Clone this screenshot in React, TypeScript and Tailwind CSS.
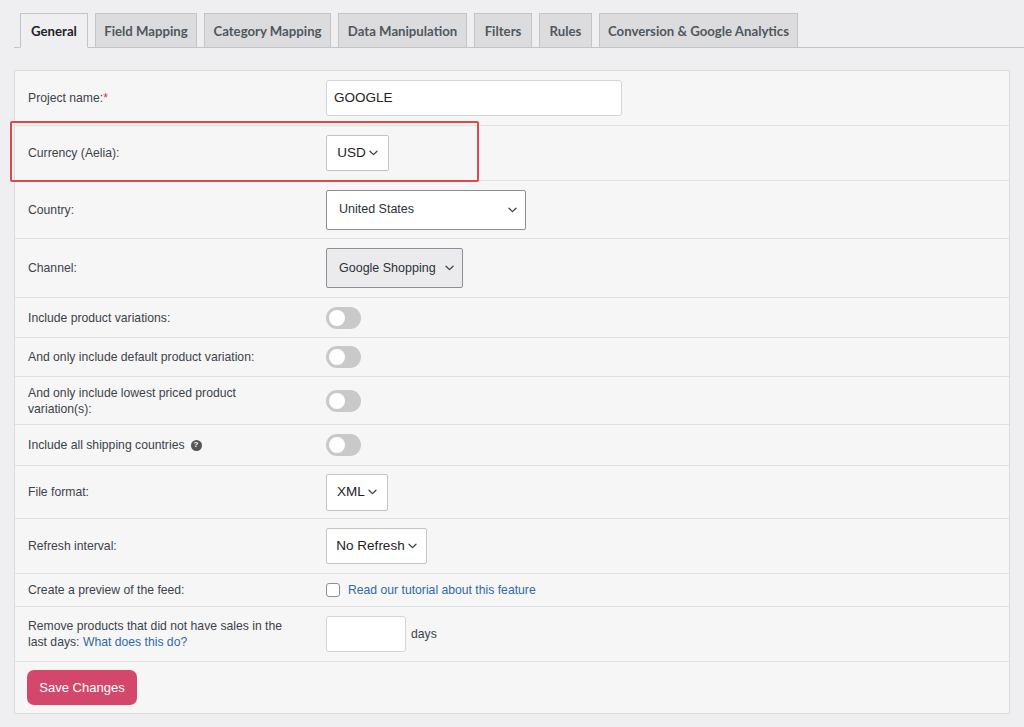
import React from "react";

const font = { fontFamily: '"Liberation Sans", Arial, sans-serif' };

function Chevron({ className = "" }: { className?: string }) {
  return (
    <svg width="9" height="6" viewBox="0 0 9 6" className={className}>
      <polyline points="1,1.2 4.5,4.6 8,1.2" fill="none" stroke="#3c434a" strokeWidth="1.3" strokeLinecap="round" strokeLinejoin="round" />
    </svg>
  );
}

function Toggle() {
  return (
    <div className="w-[35px] h-[22px] rounded-full bg-[#c9c9c9] flex items-center pl-[3px]">
      <div className="w-[16px] h-[16px] rounded-full bg-white" />
    </div>
  );
}

function Row({ label, h, children, last }: { label: React.ReactNode; h: string; children?: React.ReactNode; last?: boolean }) {
  return (
    <div className={`flex items-center ${h} ${last ? "" : "border-b border-[#e1e1e3]"}`}>
      <div className="w-[311px] pl-[13px] pr-[30px] text-[12.2px] leading-[16px] text-[#3c434a]">{label}</div>
      <div className="flex items-center">{children}</div>
    </div>
  );
}

const tabs = [
  { t: "General", w: "w-[68px]", active: true },
  { t: "Field Mapping", w: "w-[102px]" },
  { t: "Category Mapping", w: "w-[127px]" },
  { t: "Data Manipulation", w: "w-[129px]" },
  { t: "Filters", w: "w-[58px]" },
  { t: "Rules", w: "w-[53px]" },
  { t: "Conversion & Google Analytics", w: "w-[199px]" },
];

export default function App() {
  return (
    <div className="w-[1024px] h-[727px] bg-[#efeff1] overflow-hidden relative" style={font}>
      {/* Tabs */}
      <div className="pt-[14px] pl-[14px]">
        <div className="flex items-end gap-[7px] pl-[6px] border-b border-[#c3c4c7] h-[34px]">
          {tabs.map((tab) => (
            <div
              key={tab.t}
              className={`${tab.w} flex items-center justify-center text-[13.2px] font-bold border border-[#c3c4c7] pt-[2px] ${
                tab.active ? "bg-[#efeff1] text-[#1d2327] border-b-[#efeff1] -mb-px h-[35px]" : "h-[34px] bg-[#dcdcde] text-[#50575e] border-b-0"
              }`}
              style={{ fontFamily: 'Lato, "Liberation Sans", sans-serif' }}
            >
              {tab.t}
            </div>
          ))}
        </div>
      </div>

      {/* Panel */}
      <div className="ml-[14px] mt-[22px] w-[996px] bg-[#f6f6f7] border border-[#dcdcde]">
        <Row label={<>Project name:<span className="text-[#d63638]">*</span></>} h="h-[55px]">
          <div className="w-[296px] h-[36px] bg-white border border-[#d5d5d8] rounded-[3px] flex items-center pl-[7px] text-[13.5px] text-[#1d2327]">
            GOOGLE
          </div>
        </Row>
        <Row label="Currency (Aelia):" h="h-[55px]">
          <div className="w-[63px] h-[36px] bg-white border border-[#c3c4c7] rounded-[2px] flex items-center justify-center gap-[3px] text-[13.5px] text-[#1d2327]">
            USD<Chevron />
          </div>
        </Row>
        <Row label="Country:" h="h-[58px]">
          <div className="w-[200px] h-[40px] bg-white border border-[#8c8f94] rounded-[2px] flex items-center justify-between pl-[12px] pr-[8px] text-[12.5px] text-[#2c3338]">
            United States<Chevron />
          </div>
        </Row>
        <Row label="Channel:" h="h-[59px]">
          <div className="w-[137px] h-[40px] bg-[#ebebed] border border-[#8c8f94] rounded-[2px] flex items-center justify-between pl-[12px] pr-[8px] text-[12.5px] text-[#2c3338]">
            Google Shopping<Chevron />
          </div>
        </Row>
        <Row label="Include product variations:" h="h-[40px]"><Toggle /></Row>
        <Row label="And only include default product variation:" h="h-[39px]"><Toggle /></Row>
        <Row label="And only include lowest priced product variation(s):" h="h-[48px]"><Toggle /></Row>
        <Row
          label={
            <span className="flex items-center gap-[6px]">
              Include all shipping countries
              <span className="w-[11px] h-[11px] rounded-full bg-[#555] text-white text-[8px] font-bold flex items-center justify-center leading-none">?</span>
            </span>
          }
          h="h-[41px]"
        >
          <Toggle />
        </Row>
        <Row label="File format:" h="h-[53px]">
          <div className="w-[62px] h-[37px] bg-white border border-[#c3c4c7] rounded-[2px] flex items-center justify-center gap-[3px] text-[13.5px] text-[#1d2327]">
            XML<Chevron />
          </div>
        </Row>
        <Row label="Refresh interval:" h="h-[55px]">
          <div className="w-[101px] h-[36px] bg-white border border-[#c3c4c7] rounded-[2px] flex items-center justify-center gap-[3px] text-[13.5px] text-[#1d2327]">
            No Refresh<Chevron />
          </div>
        </Row>
        <Row label="Create a preview of the feed:" h="h-[33px]">
          <div className="w-[14px] h-[14px] bg-white border border-[#8c8f94] rounded-[3px]" />
          <span className="ml-[8px] text-[12.2px] text-[#2f6aa6]">Read our tutorial about this feature</span>
        </Row>
        <Row
          label={
            <p>
              Remove products that did not have sales in the last days: <a className="text-[#2f6aa6]">What does this do?</a>
            </p>
          }
          h="h-[55px]"
        >
          <div className="w-[80px] h-[36px] bg-white border border-[#d5d5d8] rounded-[3px]" />
          <span className="ml-[5px] text-[12.2px] text-[#3c434a]">days</span>
        </Row>
        <div className="h-[51px] flex items-center pl-[12px]">
          <div className="w-[110px] h-[35px] rounded-[7px] bg-[#d4476d] text-white text-[13px] flex items-center justify-center">
            Save Changes
          </div>
        </div>
      </div>

      {/* Highlight */}
      <div className="absolute left-[10px] top-[121px] w-[469px] h-[61px] border-2 border-[#dc4a4a] rounded-[2px] pointer-events-none" />
    </div>
  );
}
